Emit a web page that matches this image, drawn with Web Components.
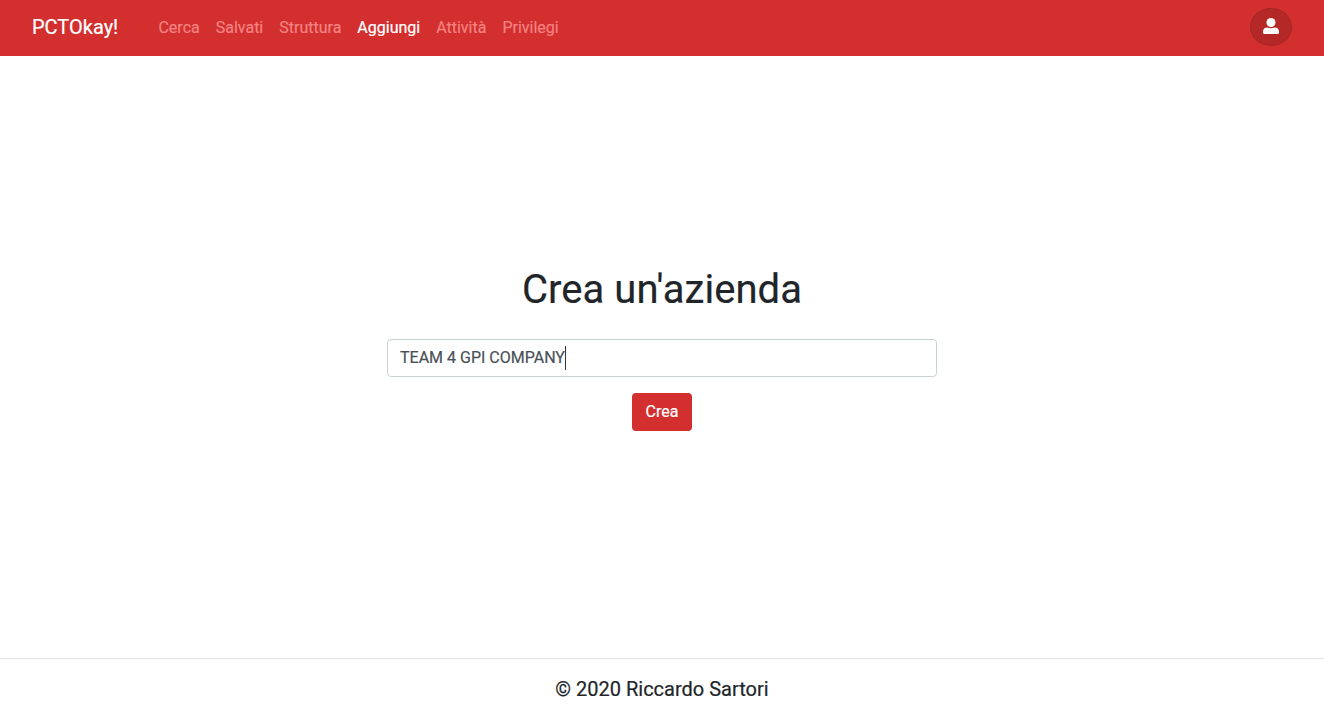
<!DOCTYPE html>
<html lang="it">
<head>
<meta charset="utf-8">
<title>PCTOkay!</title>
<style>
  body { margin: 0; font: 400 16px/24px Roboto, "Liberation Sans", sans-serif; color: #212529; background: #fff; -webkit-text-stroke: .2px; }
</style>
</head>
<body>
<pct-app>
  <pct-navbar slot="top" brand="PCTOkay!">
    <pct-nav-link>Cerca</pct-nav-link>
    <pct-nav-link>Salvati</pct-nav-link>
    <pct-nav-link>Struttura</pct-nav-link>
    <pct-nav-link active>Aggiungi</pct-nav-link>
    <pct-nav-link>Attività</pct-nav-link>
    <pct-nav-link>Privilegi</pct-nav-link>
    <pct-user-button slot="end"></pct-user-button>
  </pct-navbar>
  <pct-create-form>
    <span slot="title">Crea un'azienda</span>
    <pct-field slot="field">TEAM 4 GPI COMPANY</pct-field>
    <pct-button slot="action">Crea</pct-button>
  </pct-create-form>
  <pct-footer slot="bottom">© 2020 Riccardo Sartori</pct-footer>
</pct-app>
<script>
  function define(name, markup) {
    const template = document.createElement('template');
    template.innerHTML = markup;
    customElements.define(name, class extends HTMLElement {
      constructor() {
        super();
        this.attachShadow({ mode: 'open' }).append(template.content.cloneNode(true));
      }
      connectedCallback() {
        const brand = this.shadowRoot.querySelector('.brand');
        if (brand) brand.textContent = this.getAttribute('brand');
      }
    });
  }

  define('pct-app', `
    <style>
      :host { display: flex; flex-direction: column; height: 100vh; overflow: hidden; }
      main { flex: 1; min-height: 0; display: flex; align-items: center; justify-content: center; }
    </style>
    <slot name="top"></slot><main><slot></slot></main><slot name="bottom"></slot>`);

  define('pct-navbar', `
    <style>
      :host { display: flex; align-items: center; box-sizing: border-box; height: 56px; flex: none;
              padding: 0 32px; background: #d32f2f; }
      .brand { font-size: 20px; line-height: 30px; color: #fff; margin: 0 32.2px 2px 0; }
      nav { display: flex; flex: 1; margin-bottom: 1px; }
      ::slotted([slot=end]) { margin-bottom: 2px; }
    </style>
    <div class="brand"></div><nav><slot></slot></nav><slot name="end"></slot>`);

  define('pct-nav-link', `
    <style>
      :host { display: block; padding: 8px; color: #f38381; }
      :host([active]) { color: #fff; }
    </style>
    <slot></slot>`);

  define('pct-user-button', `
    <style>
      :host { display: flex; align-items: center; justify-content: center; box-sizing: border-box;
              width: 42px; height: 38px; border: 1px solid #a52626; border-radius: 50%; background: #b52828; }
      svg { display: block; width: 16px; height: 16px; margin-bottom: 2px; fill: #fff; }
    </style>
    <svg viewBox="0 0 16 16"><circle cx="8" cy="4.5" r="4.5"/><path d="M0 13.6C0 10.9 1.8 9.4 4.3 9.4c1 .5 2.3.8 3.7.8s2.700-.3 3.700-.8c2.500 0 4.300 1.500 4.300 4.200v.9c0 .9-.6 1.500-1.500 1.500h-13C.6 16 0 15.400 0 14.500z"/></svg>`);

  define('pct-create-form', `
    <style>
      :host { display: flex; flex-direction: column; align-items: center; width: 550px; padding-bottom: 18px; }
      h1 { margin: 0 0 24px; font-size: 40px; line-height: 50px; font-weight: 400; letter-spacing: .06px; }
      ::slotted([slot=field]) { align-self: stretch; margin-bottom: 16px; }
    </style>
    <h1><slot name="title"></slot></h1><slot name="field"></slot><slot name="action"></slot>`);

  define('pct-field', `
    <style>
      :host { display: flex; align-items: center; box-sizing: border-box; height: 38px; padding: 0 12px;
              border: 1px solid #c8d1d3; border-radius: 4px; color: #495057; }
      .caret { width: 1px; height: 24px; background: #30363a; }
    </style>
    <span class="text"><slot></slot></span><span class="caret"></span>`);

  define('pct-button', `
    <style>
      :host { display: block; box-sizing: border-box; width: 60px; height: 38px; padding-top: 7px;
              border-radius: 4px; background: #d32f2f; color: #fff; text-align: center; }
    </style>
    <slot></slot>`);

  define('pct-footer', `
    <style>
      :host { display: block; box-sizing: border-box; height: 63px; flex: none; padding-top: 15px;
              border-top: 1px solid #dee2e6; text-align: center; font-size: 20px; line-height: 30px; }
    </style>
    <slot></slot>`);
</script>
</body>
</html>
